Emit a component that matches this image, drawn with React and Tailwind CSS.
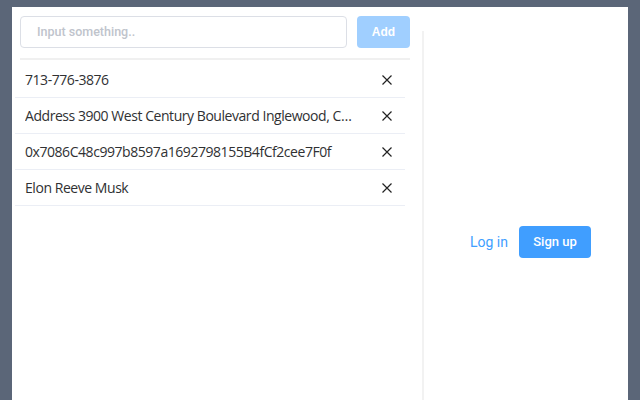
import React from "react";

const items = [
  "713-776-3876",
  "Address 3900 West Century Boulevard Inglewood, CA 90303",
  "0x7086C48c997b8597a1692798155B4fCf2cee7F0f",
  "Elon Reeve Musk",
];

function XIcon() {
  return (
    <svg width="12" height="12" viewBox="0 0 12 12" fill="none">
      <path d="M1.5 1.5 L10.5 10.5 M10.5 1.5 L1.5 10.5" stroke="#222" strokeWidth="1.2" />
    </svg>
  );
}

export default function App() {
  return (
    <div className="w-[640px] h-[400px] overflow-hidden bg-[#5b6678] pt-[7px] pl-[12px]">
      <div className="w-[616px] h-[460px] bg-white flex">
        <div className="w-[410px] pl-[8px] pr-[12px] pt-[9px] flex flex-col">
          <div className="flex gap-[10px] h-[32px]">
            <div className="w-[327px] h-[32px] border border-[#dcdfe6] rounded-[4px] flex items-center pl-[16px]">
              <span
                className="text-[12.5px] font-medium text-[#c0c4cc]"
                style={{ fontFamily: "Roboto, 'Liberation Sans', sans-serif" }}
              >
                Input something..
              </span>
            </div>
            <div
              className="w-[53px] h-[32px] rounded-[4px] bg-[#a0cfff] text-white text-[12px] font-bold flex items-center justify-center"
              style={{ fontFamily: "'Liberation Sans', Arial, sans-serif" }}
            >
              Add
            </div>
          </div>
          <div className="mt-[10px] h-[2px] bg-[#f0f0f0] w-[390px]" />
          <div className="-ml-[5px] w-[390px] pt-[2px]" style={{ fontFamily: "'Open Sans', 'Noto Sans', sans-serif" }}>
            {items.map((t) => (
              <div key={t} className="h-[36px] border-b border-[#ebeef5] flex items-center pl-[10px] pr-[12px]">
                <span className="flex-1 truncate text-[14px] text-[#303133] tracking-[-0.45px]">{t}</span>
                <span className="ml-[27px] w-[12px] flex items-center justify-center">
                  <XIcon />
                </span>
              </div>
            ))}
          </div>
        </div>
        <div className="mt-[24px] border-l-2 border-[#f2f2f2] w-[206px] h-[422px] flex items-center pl-[46px]">
          <span
            className="text-[14px] text-[#409eff]"
            style={{ fontFamily: "Roboto, 'Liberation Sans', sans-serif" }}
          >
            Log in
          </span>
          <div
            className="ml-[11px] w-[72px] h-[32px] rounded-[4px] bg-[#409eff] text-white text-[13px] font-medium flex items-center justify-center"
            style={{ fontFamily: "Roboto, 'Liberation Sans', sans-serif" }}
          >
            Sign up
          </div>
        </div>
      </div>
    </div>
  );
}
